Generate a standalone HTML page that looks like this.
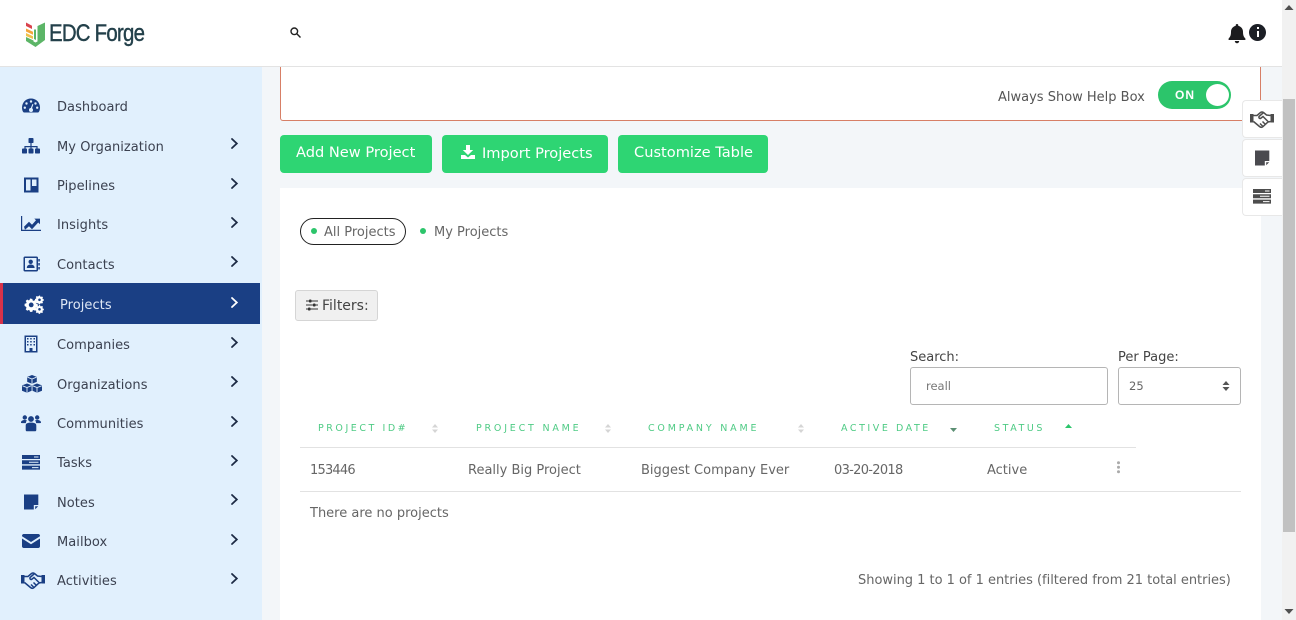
<!DOCTYPE html>
<html><head><meta charset="utf-8"><style>
html,body{margin:0;padding:0;width:1296px;height:620px;overflow:hidden;background:#f3f6f9;font-family:"DejaVu Sans","Liberation Sans",sans-serif;color:#444}
div,span,svg{position:absolute;box-sizing:border-box}
.t{white-space:nowrap;line-height:18px}
.n{font-size:13px;color:#3b4150;left:57px;letter-spacing:.05px}
.i{left:21px;width:20px;height:20px;fill:#1a3f84;color:#1a3f84}
.c{left:229px;width:11px;height:13px;fill:none;stroke:#1d2b45;stroke-width:1.800}
.b{top:135px;height:38px;background:#2ed573;border-radius:4px;color:#fff;font-size:14px}
.h{top:420px;font-size:9.500px;letter-spacing:2.550px;color:#4fcb85;font-family:"DejaVu Sans",sans-serif}
.s{top:424px;width:6px;height:9px;fill:#d5d5d5}
.r{top:462px;font-size:13px;color:#666}
.w{left:1242px;width:40px;height:38px;background:#fff;border:1px solid #e8e8e8;border-right:0;border-radius:4px 0 0 4px}
</style></head><body>
<svg width="0" height="0" style="display:none"><defs>
<symbol id="gauge" viewBox="0 0 20 20"><path d="M10 2.500C4.800 2.500 1 6.600 1 11.600c0 1.800.5 3.300 1.200 4.400.3.400.7.5 1.100.5h13.400c.4 0 .8-.1 1.100-.5.7-1.100 1.200-2.600 1.200-4.400C19 6.600 15.200 2.500 10 2.500z"/><g fill="#e1f0fd"><circle cx="10" cy="5.500" r="1.200"/><circle cx="5.500" cy="7.500" r="1.200"/><circle cx="14.500" cy="7.500" r="1.200"/><circle cx="3.800" cy="11.700" r="1.200"/><circle cx="16.200" cy="11.700" r="1.200"/><circle cx="10" cy="14" r="2"/><path d="M9.200 13.500l2.200-5.500 1 .4-2 5.500z"/></g></symbol>
<symbol id="org" viewBox="0 0 20 20"><rect x="7.500" y="2" width="5" height="5" rx=".8"/><path d="M9.400 7h1.200v3h6v3h-1.200v-1.800h-4.800V13H9.400v-1.800H4.600V13H3.400v-3h6z"/><rect x="1" y="12.500" width="5" height="5" rx=".8"/><rect x="7.500" y="12.500" width="5" height="5" rx=".8"/><rect x="14" y="12.500" width="5" height="5" rx=".8"/></symbol>
<symbol id="pipe" viewBox="0 0 20 20"><path fill-rule="evenodd" d="M3 2.500h14.500v15H3zM5 4.500v11h4.500v-11zM11 4.500v6.500h4.500V4.500z"/></symbol>
<symbol id="chart" viewBox="0 0 20 20"><path d="M0 2h1.200v13.800H20V17H0z"/><path d="M3 12.800l5-5 3 3 4-4.500-1.700-1.700H19v5.700l-1.800-1.800-6.200 6.700-3-3-4 3.600z"/></symbol>
<symbol id="book" viewBox="0 0 20 20"><path fill-rule="evenodd" d="M4 2.500h11.500a1.500 1.500 0 0 1 1.500 1.500v12a1.500 1.500 0 0 1-1.500 1.500H4A1.500 1.500 0 0 1 2.500 16V4A1.500 1.500 0 0 1 4 2.500zM4 4v12h11.500V4z"/><circle cx="9.700" cy="7.800" r="2.200"/><path d="M5.800 14c0-2.500 1.800-3.500 3.900-3.500s3.900 1 3.900 3.500z"/><rect x="17.300" y="5" width="1.500" height="2.500"/><rect x="17.300" y="9" width="1.500" height="2.500"/><rect x="17.300" y="13" width="1.500" height="2.500"/></symbol>
<symbol id="gears" viewBox="0 0 20 20"><path fill-rule="evenodd" d="M7 4.800l1.300.1.400 1.600 1 .4 1.400-.9 1.500 1.500-.8 1.400.4 1 1.600.4v2.200l-1.600.4-.4 1 .8 1.400-1.500 1.500-1.400-.8-1 .4-.4 1.500H6l-.4-1.500-1-.4-1.400.8-1.500-1.500.8-1.400-.4-1L.6 12V9.800l1.600-.4.4-1-.9-1.400 1.500-1.500 1.400.9 1-.4.400-1.600zM7.200 8.500a2.400 2.400 0 1 0 0 4.800 2.400 2.400 0 0 0 0-4.800z"/><path fill-rule="evenodd" d="M15.200 1.500l.9.100.2 1 .8.300.9-.5 1 1-.5.900.3.800 1 .2v1.400l-1 .2-.3.800.5.900-1 1-.9-.5-.8.300-.2 1h-1.400l-.2-1-.8-.3-.9.500-1-1 .5-.9-.3-.8-1-.2V4.900l1-.2.300-.8-.5-.9 1-1 .9.500.8-.3zM15.500 4.500a1.300 1.300 0 1 0 0 2.600 1.300 1.300 0 0 0 0-2.600z"/><path fill-rule="evenodd" d="M15.200 11l.9.100.2 1 .8.300.9-.5 1 1-.5.900.3.800 1 .2v1.400l-1 .2-.3.800.5.900-1 1-.9-.5-.8.300-.2 1h-1.400l-.2-1-.8-.3-.9.500-1-1 .5-.9-.3-.8-1-.2v-1.400l1-.2.300-.8-.5-.9 1-1 .9.500.8-.3zM15.500 14a1.300 1.300 0 1 0 0 2.600 1.300 1.300 0 0 0 0-2.600z"/></symbol>
<symbol id="bldg" viewBox="0 0 20 20"><path fill-rule="evenodd" d="M3.500 1.500h13v17h-13zM5 3v14h3.500v-3h3v3H15V3z"/><g><rect x="6" y="4" width="1.500" height="1.500"/><rect x="9.200" y="4" width="1.500" height="1.500"/><rect x="12.500" y="4" width="1.500" height="1.500"/><rect x="6" y="7" width="1.500" height="1.500"/><rect x="9.200" y="7" width="1.500" height="1.500"/><rect x="12.500" y="7" width="1.500" height="1.500"/><rect x="6" y="10" width="1.500" height="1.500"/><rect x="9.200" y="10" width="1.500" height="1.500"/><rect x="12.500" y="10" width="1.500" height="1.500"/></g></symbol>
<symbol id="cubes" viewBox="0 0 22 20"><path d="M11 1l4.800 1.900v5L11 9.800 6.200 7.900v-5z"/><path d="M6 9.500l4.600 1.800v5.500L6 18.800 1 16.800v-5.400z"/><path d="M16 9.500l5 1.900v5.400l-5 2-4.500-2v-5.500z"/><g stroke="#e1f0fd" stroke-width=".9" fill="none"><path d="M6.500 3.200L11 5l4.500-1.800M11 5v4.500M1.500 11.800L6 13.500l4.300-1.800M6 13.500v5M11.800 11.800l4.200 1.700 4.700-1.700M16 13.500v5"/></g></symbol>
<symbol id="users" viewBox="0 0 20 20"><circle cx="10" cy="6" r="2.900"/><circle cx="3.800" cy="4.500" r="2.200"/><circle cx="16.200" cy="4.500" r="2.200"/><path d="M5.300 10.800c1-1 2.800-1.200 4.700-1.200s3.700.2 4.700 1.200c.5.500.6 1.300.6 2.200V17c0 .8-.6 1.300-1.300 1.300H6c-.7 0-1.300-.5-1.300-1.300v-4c0-.9.100-1.700.6-2.200z"/><path d="M0 9.500c0-1.700 1.700-2.500 3.800-2.500.8 0 1.500.1 2.100.4-.6.800-1 1.700-1 2.700H.9c-.5 0-.9-.2-.9-.6zM20 9.500c0-1.700-1.700-2.500-3.800-2.500-.8 0-1.500.1-2.100.4.600.8 1 1.700 1 2.700h4c.5 0 .9-.2.900-.6z"/></symbol>
<symbol id="tasks" viewBox="0 0 20 20"><path fill-rule="evenodd" d="M1 3h18v4H1zM13 4.500v1h4.500v-1zM1 8.300h18v4H1zM8 9.800v1h9.500v-1zM1 13.600h18v4H1zM11 15.100v1h6.500v-1z"/></symbol>
<symbol id="note" viewBox="0 0 20 20"><path d="M3 2.500h14.300V13h-4.500v4.500H3z"/><path d="M14.200 14.300h3l-3 3z"/></symbol>
<symbol id="mail" viewBox="0 0 20 20"><path d="M1 4.800C1 3.800 1.800 3 2.800 3h14.400c1 0 1.800.8 1.800 1.800v.5L10 11 1 5.300z"/><path d="M1 7.500l9 5.700 9-5.700v7.700c0 1-.8 1.800-1.800 1.800H2.800c-1 0-1.800-.8-1.800-1.800z"/></symbol>
<symbol id="hands" viewBox="0 0 24 20"><path d="M0 5h3.500v8.500H0zM20.500 5H24v8.500h-3.500z" fill="currentColor"/><path d="M3.500 6.500L7 6.500l3.500-3q1.500-1 3 0l3 2.500 4 .5M20.500 12.500L18 13l-5.500 5q-1.500.8-3-.5l-6-5M13 4L9 7.500q-.5 2 1.500 2L13 7.500l5.500 5.500M15 15l-2.500-2.500M12.500 17l-2.500-2.500" fill="none" stroke="currentColor" stroke-width="1.500"/></symbol>
<symbol id="chev" viewBox="0 0 11 13"><path d="M3 2l4.800 4.500L3 11" stroke-linecap="round"/></symbol>
</defs></svg>

<!-- main -->
<div style="left:280px;top:60px;width:981px;height:61px;background:#fff;border:1px solid #d77f66;border-top:0;border-radius:0 0 3px 3px"></div>
<span class="t" style="left:998px;top:89px;font-size:13px;color:#555;">Always Show Help Box</span>
<div style="left:1158px;top:81px;width:73px;height:28px;background:#2cc56b;border-radius:14px"></div>
<div style="left:1206px;top:84px;width:23px;height:22px;background:#fff;border-radius:50%"></div>
<span class="t" style="left:1175px;top:86px;color:#fff;font-size:12px;font-weight:bold;letter-spacing:1px;font-family:'Liberation Sans',sans-serif;">ON</span>

<div class="b" style="left:280px;width:152px"></div><span class="t" style="left:296px;top:144px;color:#fff;font-size:14.600px;">Add New Project</span>
<div class="b" style="left:442px;width:166px"></div>
<svg style="left:461px;top:145px" width="14" height="14" viewBox="0 0 14 14" fill="#fff"><path d="M5 0h4v5h3.200L7 10 1.800 5H5z"/><path d="M0 10h4l3 2.500 3-2.500h4v4H0z"/></svg>
<span class="t" style="left:482px;top:145px;color:#fff;font-size:14.600px;">Import Projects</span>
<div class="b" style="left:618px;width:150px"></div><span class="t" style="left:634px;top:144px;color:#fff;font-size:14.600px;">Customize Table</span>

<div style="left:280px;top:188px;width:981px;height:432px;background:#fff"></div>
<div style="left:300px;top:218px;width:106px;height:27px;border:1px solid #222;border-radius:14px"></div>
<div style="left:311px;top:228px;width:6px;height:6px;border-radius:50%;background:#2cc56b"></div>
<span class="t" style="left:324px;top:224px;font-size:13px;color:#666;">All Projects</span>
<div style="left:420px;top:228px;width:6px;height:6px;border-radius:50%;background:#2cc56b"></div>
<span class="t" style="left:434px;top:224px;font-size:13px;color:#666;">My Projects</span>

<div style="left:295px;top:290px;width:83px;height:31px;background:#f0f0f0;border:1px solid #d5d5d5;border-radius:3px"></div>
<svg style="left:306px;top:299px" width="12" height="12" viewBox="0 0 12 12" fill="#333"><rect y="1.500" width="12" height="1"/><rect y="5.500" width="12" height="1"/><rect y="9.500" width="12" height="1"/><rect x="3" y=".5" width="2.500" height="3" rx=".8"/><rect x="7" y="4.500" width="2.500" height="3" rx=".8"/><rect x="2" y="8.500" width="2.500" height="3" rx=".8"/></svg>
<span class="t" style="left:322px;top:297px;font-size:14px;color:#444;">Filters:</span>

<span class="t" style="left:910px;top:349px;font-size:13px;color:#444;">Search:</span>
<span class="t" style="left:1118px;top:349px;font-size:13px;color:#444;">Per Page:</span>
<div style="left:910px;top:367px;width:198px;height:38px;border:1px solid #b5b5b5;border-radius:3px;background:#fff"></div>
<span class="t" style="left:926px;top:377px;font-size:11.500px;color:#777;">reall</span>
<div style="left:1118px;top:367px;width:123px;height:38px;border:1px solid #b5b5b5;border-radius:3px;background:#fff"></div>
<span class="t" style="left:1129px;top:377px;font-size:11.500px;color:#666;">25</span>
<svg style="left:1222px;top:381px" width="8" height="10" viewBox="0 0 8 10" fill="#555"><path d="M4 0l3.500 4H.5zM4 10L.5 6h7z"/></svg>

<span class="t h" style="left:318px">PROJECT ID#</span>
<span class="t h" style="left:476px;letter-spacing:2.800px">PROJECT NAME</span>
<span class="t h" style="left:648px;letter-spacing:2.800px">COMPANY NAME</span>
<span class="t h" style="left:841px">ACTIVE DATE</span>
<span class="t h" style="left:994px">STATUS</span>
<svg class="s" style="left:432px" viewBox="0 0 6 9"><path d="M3 0l3 3.500H0zM3 9L0 5.500h6z"/></svg>
<svg class="s" style="left:605px" viewBox="0 0 6 9"><path d="M3 0l3 3.500H0zM3 9L0 5.500h6z"/></svg>
<svg class="s" style="left:798px" viewBox="0 0 6 9"><path d="M3 0l3 3.500H0zM3 9L0 5.500h6z"/></svg>
<svg style="left:950px;top:428px" width="7" height="4" viewBox="0 0 7 4" fill="#5b8f73"><path d="M0 0h7L3.500 4z"/></svg>
<svg style="left:1065px;top:424px" width="7" height="4" viewBox="0 0 7 4" fill="#2cc56b"><path d="M0 4h7L3.500 0z"/></svg>
<div style="left:300px;top:447px;width:836px;height:1px;background:#e2e2e2"></div>
<span class="t r" style="left:310px;letter-spacing:-.8px">153446</span>
<span class="t r" style="left:468px">Really Big Project</span>
<span class="t r" style="left:641px">Biggest Company Ever</span>
<span class="t r" style="left:834px;letter-spacing:-.7px">03-20-2018</span>
<span class="t r" style="left:987px">Active</span>
<svg style="left:1116px;top:461px" width="5" height="13" viewBox="0 0 5 13" fill="#aaa"><circle cx="2.500" cy="1.800" r="1.500"/><circle cx="2.500" cy="6.300" r="1.500"/><circle cx="2.500" cy="10.800" r="1.500"/></svg>
<div style="left:300px;top:491px;width:941px;height:1px;background:#e2e2e2"></div>
<span class="t" style="left:310px;top:505px;font-size:13px;color:#666;">There are no projects</span>
<span class="t" style="left:858px;top:572px;font-size:13px;color:#666;letter-spacing:-.02px">Showing 1 to 1 of 1 entries (filtered from 21 total entries)</span>

<!-- scrollbar -->
<div style="left:1282px;top:0;width:14px;height:620px;background:#f1f1f1"></div>
<div style="left:1283px;top:99px;width:12px;height:433px;background:#c1c1c1"></div>
<svg style="left:1284px;top:5px" width="10" height="6" viewBox="0 0 10 6" fill="#505050"><path d="M5 0l4.500 5H.5z"/></svg>
<svg style="left:1284px;top:609px" width="10" height="6" viewBox="0 0 10 6" fill="#505050"><path d="M5 5L.5 0h9z"/></svg>

<!-- right widgets -->
<div class="w" style="top:100px"></div>
<svg style="left:1250px;top:109px;color:#4d4d4d" width="24" height="20"><use href="#hands"/></svg>
<div class="w" style="top:139px"></div>
<svg style="left:1252px;top:148px;fill:#4a4a4f" width="20" height="20"><use href="#note"/></svg>
<div class="w" style="top:178px"></div>
<svg style="left:1252px;top:186px;fill:#4d4d4d" width="20" height="20"><use href="#tasks"/></svg>

<!-- sidebar -->
<div style="left:0;top:66px;width:262px;height:554px;background:#e1f0fd"></div>
<div style="left:0;top:283px;width:260px;height:41px;background:#1a3f84"></div>
<div style="left:0;top:283px;width:3px;height:41px;background:#d7324a"></div>

<svg class="i" style="top:96px"><use href="#gauge"/></svg><span class="t n" style="top:99px">Dashboard</span>
<svg class="i" style="top:136px"><use href="#org"/></svg><span class="t n" style="top:139px">My Organization</span>
<svg class="i" style="top:175px"><use href="#pipe"/></svg><span class="t n" style="top:178px">Pipelines</span>
<svg class="i" style="top:214px"><use href="#chart"/></svg><span class="t n" style="top:217px">Insights</span>
<svg class="i" style="top:254px"><use href="#book"/></svg><span class="t n" style="top:257px">Contacts</span>
<svg class="i" style="top:294px;left:24px;fill:#fff"><use href="#gears"/></svg><span class="t n" style="top:297px;left:60px;color:#dfe8f5">Projects</span>
<svg class="i" style="top:334px"><use href="#bldg"/></svg><span class="t n" style="top:337px">Companies</span>
<svg class="i" style="top:374px;width:22px"><use href="#cubes"/></svg><span class="t n" style="top:377px">Organizations</span>
<svg class="i" style="top:413px"><use href="#users"/></svg><span class="t n" style="top:416px">Communities</span>
<svg class="i" style="top:452px"><use href="#tasks"/></svg><span class="t n" style="top:455px">Tasks</span>
<svg class="i" style="top:492px"><use href="#note"/></svg><span class="t n" style="top:495px">Notes</span>
<svg class="i" style="top:531px"><use href="#mail"/></svg><span class="t n" style="top:534px">Mailbox</span>
<svg class="i" style="top:570px;width:24px"><use href="#hands"/></svg><span class="t n" style="top:573px">Activities</span>

<svg class="c" style="top:137px"><use href="#chev"/></svg>
<svg class="c" style="top:177px"><use href="#chev"/></svg>
<svg class="c" style="top:216px"><use href="#chev"/></svg>
<svg class="c" style="top:255px"><use href="#chev"/></svg>
<svg class="c" style="top:296px;stroke:#fff"><use href="#chev"/></svg>
<svg class="c" style="top:336px"><use href="#chev"/></svg>
<svg class="c" style="top:375px"><use href="#chev"/></svg>
<svg class="c" style="top:415px"><use href="#chev"/></svg>
<svg class="c" style="top:454px"><use href="#chev"/></svg>
<svg class="c" style="top:493px"><use href="#chev"/></svg>
<svg class="c" style="top:533px"><use href="#chev"/></svg>
<svg class="c" style="top:572px"><use href="#chev"/></svg>

<!-- header -->
<div style="left:0;top:0;width:1282px;height:67px;background:#fff;border-bottom:1px solid #e3e3e3"></div>
<svg style="left:24px;top:21px" width="23" height="27" viewBox="0 0 23 27">
<path d="M2 1.500l6 3.200v3.300L2 5z" fill="#d9434e"/><path d="M2 7.500l7 3.200v3L2 10.500z" fill="#f3a53a"/><path d="M2 12l7 3.200v2.800l-7-3z" fill="#f1c24b"/>
<path d="M2 16l7.500 3.500v1L11.500 21.500 13.500 20.500V5L21 1.500V19L11.500 26 2 20z" fill="#5cb567"/>
<path d="M10 8.500h2V19l-2-1z" fill="#5cb567"/>
</svg>
<span class="t" style="left:49px;top:19px;font-family:'Liberation Sans',sans-serif;font-size:24px;line-height:30px;color:#23404a;letter-spacing:-.9px;-webkit-text-stroke:.4px #23404a;transform:scaleX(.85);transform-origin:0 50%;">EDC Forge</span>
<svg style="left:290px;top:27px" width="11" height="11" viewBox="0 0 11 11" fill="none" stroke="#222" stroke-width="1.400"><circle cx="4.300" cy="4.300" r="3.300"/><path d="M6.800 6.800L10.500 10.500"/></svg>
<svg style="left:1228px;top:24px" width="18" height="20" viewBox="0 0 18 20" fill="#1c1c1e"><path d="M9 0c.8 0 1.300.6 1.300 1.300v.6C13 2.500 15 4.800 15 7.800c0 4 1 5.300 2.400 6.800.4.500.1 1.400-.7 1.400H1.300c-.8 0-1.100-.9-.7-1.400C2 13.100 3 11.800 3 7.800c0-3 2-5.300 4.700-5.900v-.6C7.700.6 8.200 0 9 0z"/><path d="M6.800 17h4.400c0 1.300-1 2.300-2.200 2.300S6.800 18.300 6.800 17z"/></svg>
<div style="left:1249px;top:24px;width:17px;height:17px;border-radius:50%;background:#1c1f26"></div>
<div style="left:1256.500px;top:27px;width:2.200px;height:2.400px;background:#fff"></div>
<div style="left:1256.500px;top:31px;width:2.200px;height:6px;background:#fff"></div>
</body></html>
